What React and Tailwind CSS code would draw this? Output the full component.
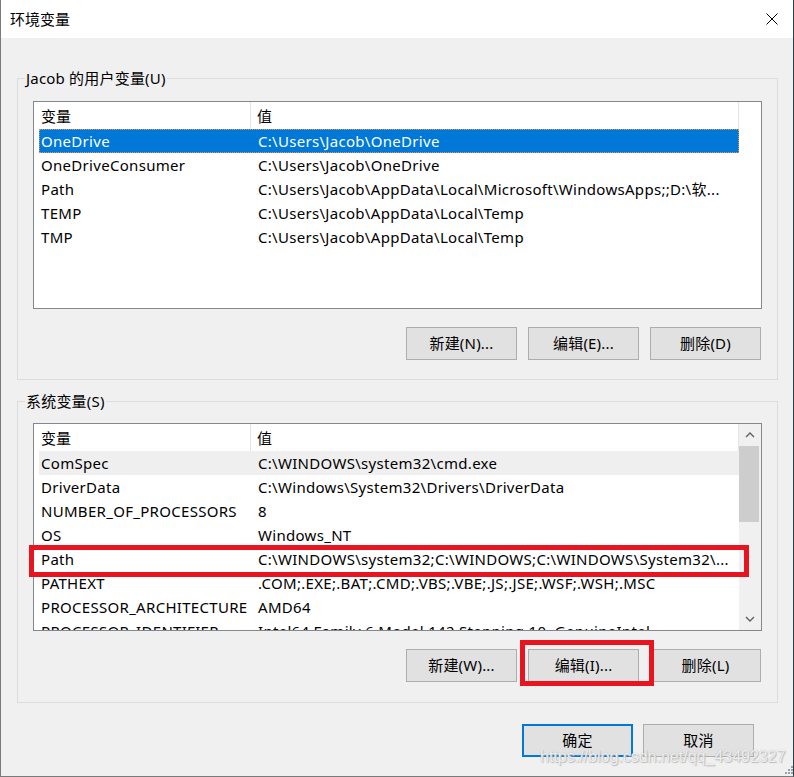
import React from "react";

const userVars = [
  ["OneDrive", "C:\\Users\\Jacob\\OneDrive"],
  ["OneDriveConsumer", "C:\\Users\\Jacob\\OneDrive"],
  ["Path", "C:\\Users\\Jacob\\AppData\\Local\\Microsoft\\WindowsApps;;D:\\软..."],
  ["TEMP", "C:\\Users\\Jacob\\AppData\\Local\\Temp"],
  ["TMP", "C:\\Users\\Jacob\\AppData\\Local\\Temp"],
];

const sysVars = [
  ["ComSpec", "C:\\WINDOWS\\system32\\cmd.exe"],
  ["DriverData", "C:\\Windows\\System32\\Drivers\\DriverData"],
  ["NUMBER_OF_PROCESSORS", "8"],
  ["OS", "Windows_NT"],
  ["Path", "C:\\WINDOWS\\system32;C:\\WINDOWS;C:\\WINDOWS\\System32\\..."],
  ["PATHEXT", ".COM;.EXE;.BAT;.CMD;.VBS;.VBE;.JS;.JSE;.WSF;.WSH;.MSC"],
  ["PROCESSOR_ARCHITECTURE", "AMD64"],
  ["PROCESSOR_IDENTIFIER", "Intel64 Family 6 Model 142 Stepping 10, GenuineIntel"],
];

function Header() {
  return (
    <div className="flex h-[27px] w-[705px] shrink-0 items-center bg-white">
      <div className="flex h-full w-[217px] items-center border-r border-[#e5e5e5] pl-[7px] pt-[2px]">变量</div>
      <div className="flex h-full flex-1 items-center border-r border-[#e5e5e5] pl-[6px] pt-[2px]">值</div>
    </div>
  );
}

function Row({ name, value, selected, hover }) {
  let cls = "flex h-[24px] w-[700px] shrink-0 items-center whitespace-nowrap overflow-hidden tracking-[0.3px]";
  if (selected) cls += " bg-[#0078d7] text-white outline outline-1 outline-dotted outline-[#e39a4c] -outline-offset-1";
  else if (hover) cls += " bg-[#efefef]";
  return (
    <div className={cls}>
      <div className="w-[212px] shrink-0 overflow-hidden pl-[2px]">{name}</div>
      <div className="flex-1 overflow-hidden pl-[7px]">{value}</div>
    </div>
  );
}

function Chevron({ down }) {
  return (
    <svg width="10" height="6" viewBox="0 0 10 6">
      <path
        d={down ? "M1 1 L5 5 L9 1" : "M1 5 L5 1 L9 5"}
        fill="none"
        stroke="#606060"
        strokeWidth="1.4"
      />
    </svg>
  );
}

function ListBox({ rows, scroll, selectedIndex, hoverIndex }) {
  return (
    <div className="flex h-[208px] w-full border border-[#828790] bg-white overflow-hidden">
      <div className="flex w-[705px] flex-col overflow-hidden">
        <Header />
        <div className="flex flex-col pl-[5px]">
          {rows.map(([n, v], i) => (
            <Row key={i} name={n} value={v} selected={i === selectedIndex} hover={i === hoverIndex} />
          ))}
        </div>
      </div>
      {scroll ? (
        <div className="flex w-[22px] flex-col bg-[#f0f0f0]">
          <div className="flex h-[22px] items-center justify-center">
            <Chevron />
          </div>
          <div className="mr-[2px] h-[76px] bg-[#cdcdcd]" />
          <div className="flex-1" />
          <div className="flex h-[22px] items-center justify-center">
            <Chevron down />
          </div>
        </div>
      ) : (
        <div className="w-[22px]" />
      )}
    </div>
  );
}

function Btn({ children, primary }) {
  return (
    <div
      className={
        "flex h-[33px] w-[111px] items-center justify-center bg-[#e1e1e1] tracking-[0.2px] " +
        (primary ? "border-2 border-[#0078d7]" : "border border-[#adadad]")
      }
    >
      {children}
    </div>
  );
}

function Group({ label, children, pt, pb }) {
  return (
    <div className={"relative ml-[16px] w-[761px] border border-[#dcdcdc] px-[15px] " + pt + " " + pb}>
      <div className="absolute left-[7px] top-[-11px] bg-[#f0f0f0] px-[1px] leading-[20px] tracking-[0.2px]">{label}</div>
      {children}
    </div>
  );
}

export default function App() {
  return (
    <div
      className="relative h-[777px] w-[794px] overflow-hidden border-b border-l border-r border-[#7a7a7a] border-r-[#2d3b4c] bg-[#f0f0f0] text-[15px] text-black"
      style={{ fontFamily: '"Noto Sans", "Noto Sans CJK SC", sans-serif' }}
    >
      <div className="flex h-[38px] items-center justify-between bg-white pl-[9px] pr-[15px]">
        <span>环境变量</span>
        <svg width="12" height="12" viewBox="0 0 12 12">
          <path d="M0.5 0.5 L11.5 11.5 M11.5 0.5 L0.5 11.5" stroke="#000" strokeWidth="1" />
        </svg>
      </div>

      <div className="flex flex-col">
        <div className="mt-[40px]">
          <Group label="Jacob 的用户变量(U)" pt="pt-[22px]" pb="pb-[19px]">
            <ListBox rows={userVars} selectedIndex={0} hoverIndex={-1} />
            <div className="mt-[18px] flex justify-end gap-[11px] pr-[1px]">
              <Btn>新建(N)...</Btn>
              <Btn>编辑(E)...</Btn>
              <Btn>删除(D)</Btn>
            </div>
          </Group>
        </div>

        <div className="mt-[21px]">
          <Group label="系统变量(S)" pt="pt-[21px]" pb="pb-[20px]">
            <ListBox rows={sysVars} scroll selectedIndex={-1} hoverIndex={0} />
            <div className="mt-[18px] flex justify-end gap-[11px] pr-[1px]">
              <Btn>新建(W)...</Btn>
              <Btn>编辑(I)...</Btn>
              <Btn>删除(L)</Btn>
            </div>
          </Group>
        </div>

        <div className="mt-[21px] flex justify-end gap-[10px] pr-[39px]">
          <Btn primary>确定</Btn>
          <Btn>取消</Btn>
        </div>
      </div>

      {/* annotation boxes */}
      <div className="pointer-events-none absolute left-[28px] top-[545px] h-[32px] w-[720px] border-[5px] border-[#e8141f]" />
      <div className="pointer-events-none absolute left-[519px] top-[640px] h-[46px] w-[134px] border-[5px] border-[#e8141f]" />

      {/* watermark */}
      <div
        className="pointer-events-none absolute left-[539px] top-[747px] whitespace-nowrap text-[16px] leading-[20px] text-white/80 [text-shadow:0_0_1px_#a5a5a5,1px_1px_1px_#bdbdbd]"
        style={{ fontFamily: '"Liberation Sans", Arial, sans-serif' }}
      >
        https://blog.csdn.net/qq_43492327
      </div>

      {/* resize grip */}
      <svg className="absolute left-[782px] top-[764px]" width="10" height="10" viewBox="0 0 10 10">
        <rect x="8" y="2" width="2" height="2" fill="#a0a0a0" />
        <rect x="5" y="5" width="2" height="2" fill="#a0a0a0" />
        <rect x="8" y="5" width="2" height="2" fill="#a0a0a0" />
        <rect x="2" y="8" width="2" height="2" fill="#a0a0a0" />
        <rect x="5" y="8" width="2" height="2" fill="#a0a0a0" />
        <rect x="8" y="8" width="2" height="2" fill="#a0a0a0" />
      </svg>
    </div>
  );
}
